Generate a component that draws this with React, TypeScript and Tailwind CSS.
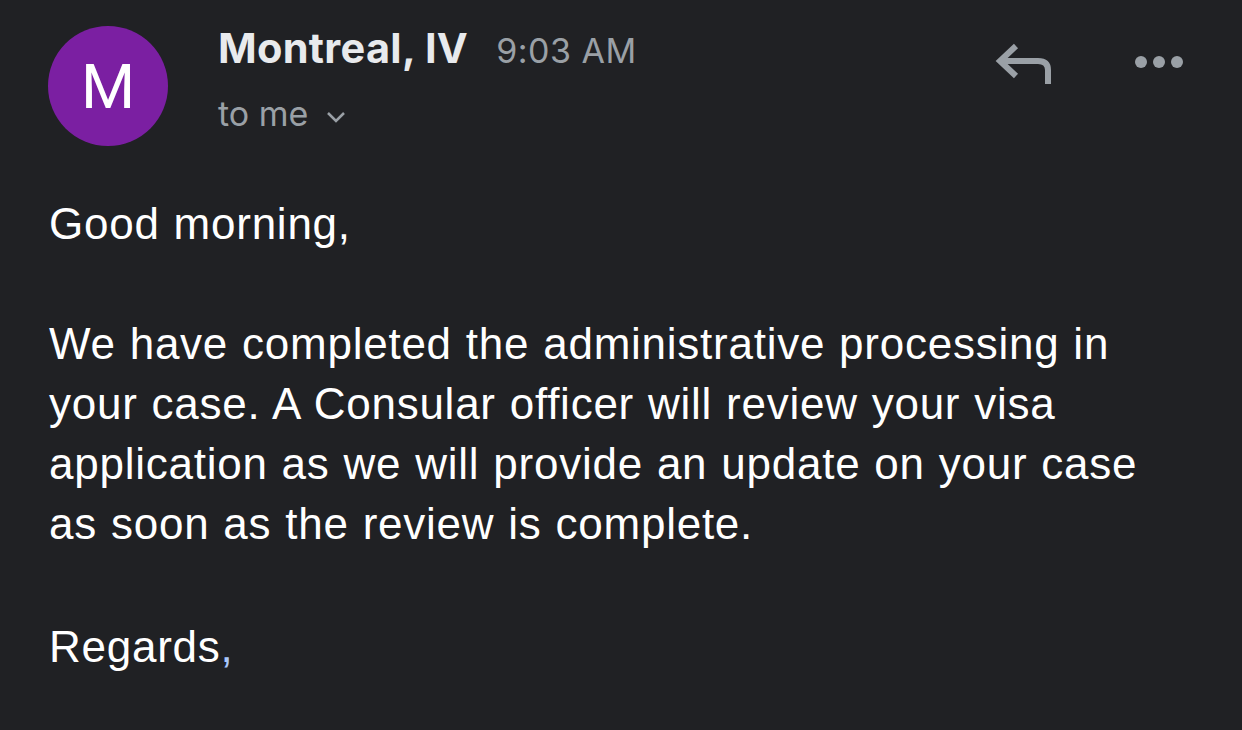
import React from 'react'

function ReplyIcon() {
  return (
    <svg width="60" height="46" viewBox="0 0 60 46" fill="none">
      <path
        d="M22 4 L6 19 L22 34 M6 19 H44 Q54 19 54 28 V42"
        stroke="#9aa0a6"
        strokeWidth="6"
        strokeLinecap="butt"
        strokeLinejoin="miter"
      />
    </svg>
  )
}

function MoreIcon() {
  return (
    <svg width="50" height="14" viewBox="0 0 50 14" fill="#9aa0a6">
      <circle cx="7" cy="7" r="6" />
      <circle cx="25" cy="7" r="6" />
      <circle cx="43" cy="7" r="6" />
    </svg>
  )
}

export default function App() {
  const body = { fontFamily: '"Liberation Sans", Arial, sans-serif' }
  const head = { fontFamily: 'Inter, Roboto, "Noto Sans", sans-serif' }
  return (
    <div className="w-[1242px] h-[730px] bg-[#202124] overflow-hidden text-white">
      {/* header */}
      <div className="flex items-start pt-[26px] pl-[48px]">
        <div
          className="w-[120px] h-[120px] rounded-full bg-[#7b1fa2] flex items-center justify-center text-[62px] text-white shrink-0"
          style={{ fontFamily: 'Roboto, "Noto Sans", sans-serif' }}
        >
          M
        </div>
        <div className="ml-[50px] flex-1" style={head}>
          <div className="flex items-baseline h-[44px]">
            <span className="text-[41.5px] font-bold text-[#e8eaed] leading-[44px] tracking-[0.3px]">Montreal, IV</span>
            <span className="ml-[28px] text-[34px] text-[#9aa0a6] leading-[44px] tracking-[0.5px]">9:03 AM</span>
          </div>
          <div className="flex items-center mt-[24px] text-[34px] text-[#9aa0a6] leading-[40px]">
            <span>to me</span>
            <svg className="ml-[17px] mt-[6px]" width="22" height="14" viewBox="0 0 22 14" fill="none">
              <path d="M3 3 L11 11 L19 3" stroke="#9aa0a6" strokeWidth="2.5" />
            </svg>
          </div>
        </div>
        <div className="flex items-start pt-[16px] pr-[58px] gap-[80px]">
          <ReplyIcon />
          <div className="pt-[13px]">
            <MoreIcon />
          </div>
        </div>
      </div>

      {/* body */}
      <div className="pl-[49px] pt-[48px] text-[44px] leading-[60px] tracking-[0.75px] [word-spacing:1px] text-white" style={body}>
        <p>Good morning,</p>
        <p className="mt-[60px]">
          We have completed the administrative processing in
          <br />
          your case. A Consular officer will review your visa
          <br />
          application as we will provide an update on your case
          <br />
          as soon as the review is complete.
        </p>
        <p className="mt-[63px]">
          Regards<span className="text-[#a8c7fa]">,</span>
        </p>
      </div>
    </div>
  )
}
